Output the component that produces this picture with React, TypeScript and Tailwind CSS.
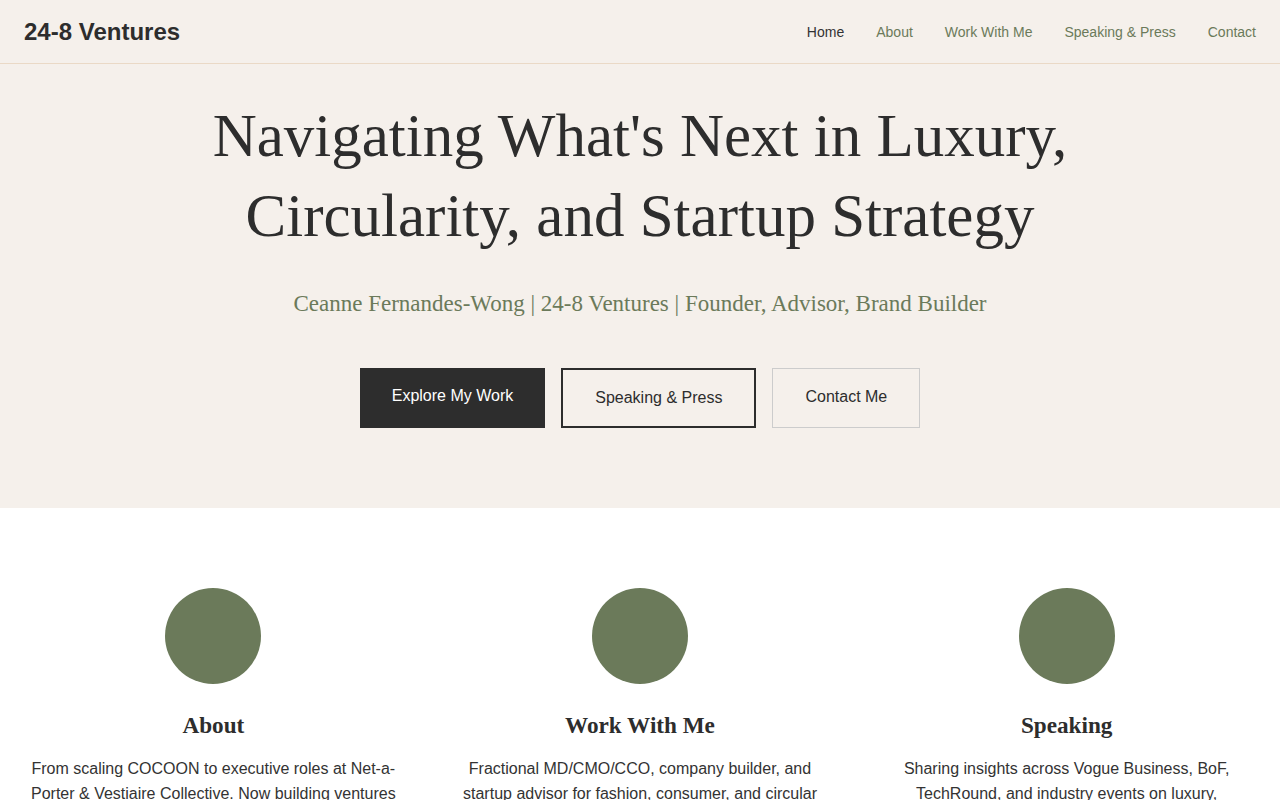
import React from 'react'

const navLinks = ['Home', 'About', 'Work With Me', 'Speaking & Press', 'Contact']

const cards = [
  {
    title: 'About',
    body: 'From scaling COCOON to executive roles at Net-a-Porter & Vestiaire Collective. Now building ventures at the intersection of luxury and circularity.',
  },
  {
    title: 'Work With Me',
    body: 'Fractional MD/CMO/CCO, company builder, and startup advisor for fashion, consumer, and circular economy brands ready to scale.',
  },
  {
    title: 'Speaking',
    body: 'Sharing insights across Vogue Business, BoF, TechRound, and industry events on luxury, sustainability, and the future of retail.',
  },
]

const sans = 'font-["Liberation_Sans",Arial,sans-serif]'
const serif = 'font-["Liberation_Serif","Times_New_Roman",serif]'

const App: React.FC = () => {
  return (
    <div className={`min-h-screen bg-white text-[#2d2d2d] ${sans}`}>
      <header className="h-16 px-6 flex items-center justify-between bg-[#f5f0eb] border-b border-[#ead9c6]">
        <a className="text-2xl font-bold text-[#2d2d2d]">24-8 Ventures</a>
        <nav className="flex items-center gap-8 text-sm">
          {navLinks.map((link, i) => (
            <a key={link} className={i === 0 ? 'text-[#333333]' : 'text-[#6b7a5a]'}>
              {link}
            </a>
          ))}
        </nav>
      </header>

      <section className="bg-[#f5f0eb] pt-8 pb-20 text-center">
        <h1 className={`${serif} text-[61px] leading-[80px] font-normal text-[#2d2d2d] max-w-[900px] mx-auto`}>
          Navigating What's Next in Luxury, Circularity, and Startup Strategy
        </h1>
        <p className={`${serif} mt-[30px] text-[23px] leading-9 text-[#6b7a5a]`}>
          Ceanne Fernandes-Wong | 24-8 Ventures | Founder, Advisor, Brand Builder
        </p>
        <div className="mt-[46px] flex justify-center gap-4 text-base leading-6">
          <a className="px-8 pt-4 pb-5 bg-[#2d2d2d] text-white">Explore My Work</a>
          <a className="px-8 py-4 border-2 border-[#2d2d2d] text-[#2d2d2d]">Speaking &amp; Press</a>
          <a className="px-8 pt-4 pb-[18px] border border-[#cccccc] text-[#2d2d2d]">Contact Me</a>
        </div>
      </section>

      <section className="px-6 pt-20 pb-20 grid grid-cols-3 gap-12">
        {cards.map((card) => (
          <div key={card.title} className="flex flex-col items-center text-center">
            <div className="w-24 h-24 rounded-full bg-[#6b7a5a]" />
            <h2 className={`${serif} mt-7 text-[23.2px] leading-[1.2] font-bold text-[#2d2d2d]`}>
              {card.title}
            </h2>
            <p className="mt-4 text-base leading-[1.6] text-[#333333]">{card.body}</p>
          </div>
        ))}
      </section>
    </div>
  )
}

export default App
